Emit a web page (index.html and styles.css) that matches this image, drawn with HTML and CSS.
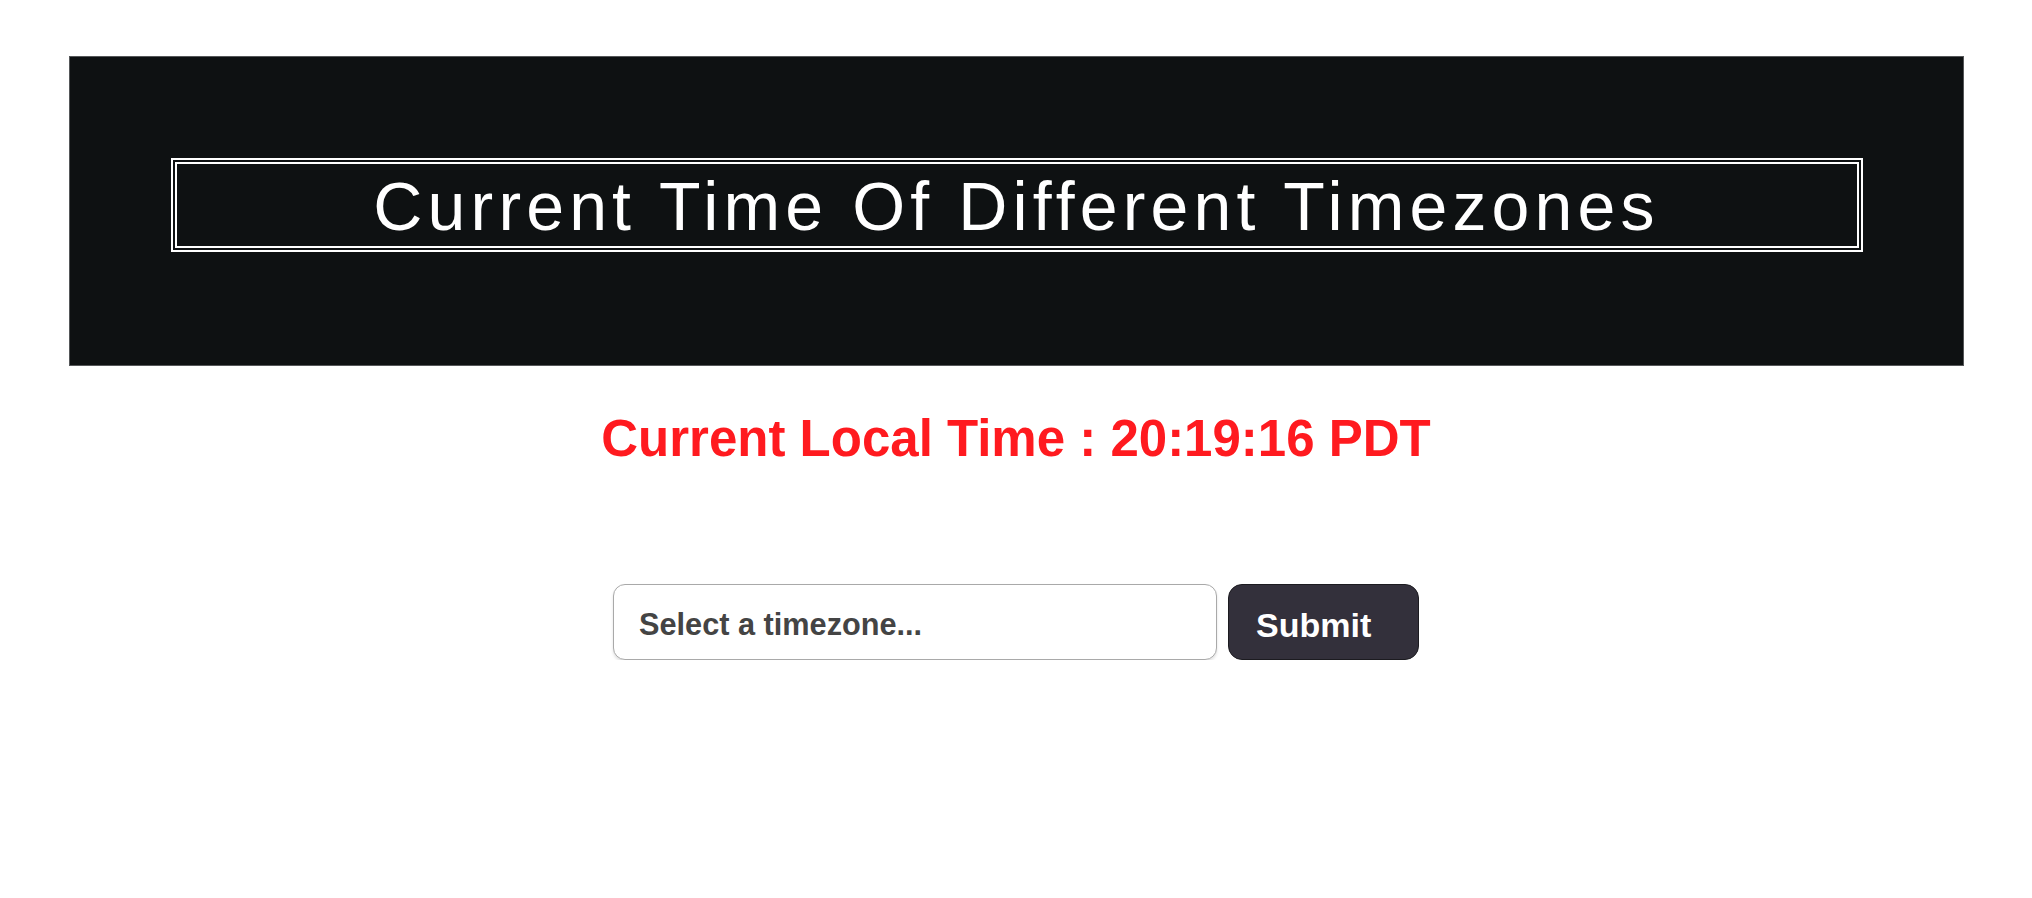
FILE: index.html
```html
<!DOCTYPE html>
<html lang="en">
<head>
<meta charset="utf-8">
<title>Current Time Of Different Timezones</title>
<link rel="stylesheet" href="styles.css">
</head>
<body>
  <header class="banner">
    <h1 class="banner-title">Current Time Of Different Timezones</h1>
  </header>
  <h2 class="local-time">Current Local Time : 20:19:16 PDT</h2>
  <form class="tz-form">
    <input class="tz-input" type="text" placeholder="Select a timezone...">
    <button class="tz-submit" type="button">Submit</button>
  </form>
</body>
</html>
```
FILE: styles.css
```css
html, body {
  margin: 0;
  padding: 0;
  background: #ffffff;
}

body {
  font-family: "Liberation Sans", Arial, Helvetica, sans-serif;
  padding-top: 56px;
}

.banner {
  box-sizing: border-box;
  width: 1895px;
  height: 310px;
  margin: 0 auto;
  padding: 101px 100px 0 101px;
  background: #0e1112;
  border: 1px solid #555759;
}

.banner-title {
  margin: 0;
  box-sizing: border-box;
  height: 94px;
  padding-top: 3px;
  border: 6px double #ffffff;
  color: #ffffff;
  font-weight: normal;
  font-size: 68px;
  line-height: 79px;
  letter-spacing: 5.15px;
  text-align: center;
}

.local-time {
  margin: 43px 0 0;
  color: #ff1a1f;
  font-size: 51px;
  font-weight: bold;
  text-align: center;
  line-height: normal;
}

.tz-form {
  display: flex;
  justify-content: center;
  gap: 11px;
  margin-top: 116px;
}

.tz-input {
  box-sizing: border-box;
  width: 604px;
  height: 76px;
  padding: 6px 0 0 25px;
  border: 1px solid #a9a9a9;
  border-radius: 12px;
  box-shadow: 0 2px 3px rgba(0, 0, 0, 0.12);
  font-family: "Liberation Sans", Arial, sans-serif;
  font-size: 30.7px;
  font-weight: bold;
  color: #444444;
  outline: none;
}

.tz-input::placeholder {
  color: #444444;
  opacity: 1;
}

.tz-submit {
  box-sizing: border-box;
  width: 191px;
  height: 76px;
  padding: 6px 0 0 27px;
  text-align: left;
  background: #33303b;
  border: 1px solid #1c1b20;
  border-radius: 14px;
  color: #ffffff;
  font-family: "Liberation Sans", Arial, sans-serif;
  font-size: 34px;
  font-weight: bold;
  cursor: pointer;
}
```
